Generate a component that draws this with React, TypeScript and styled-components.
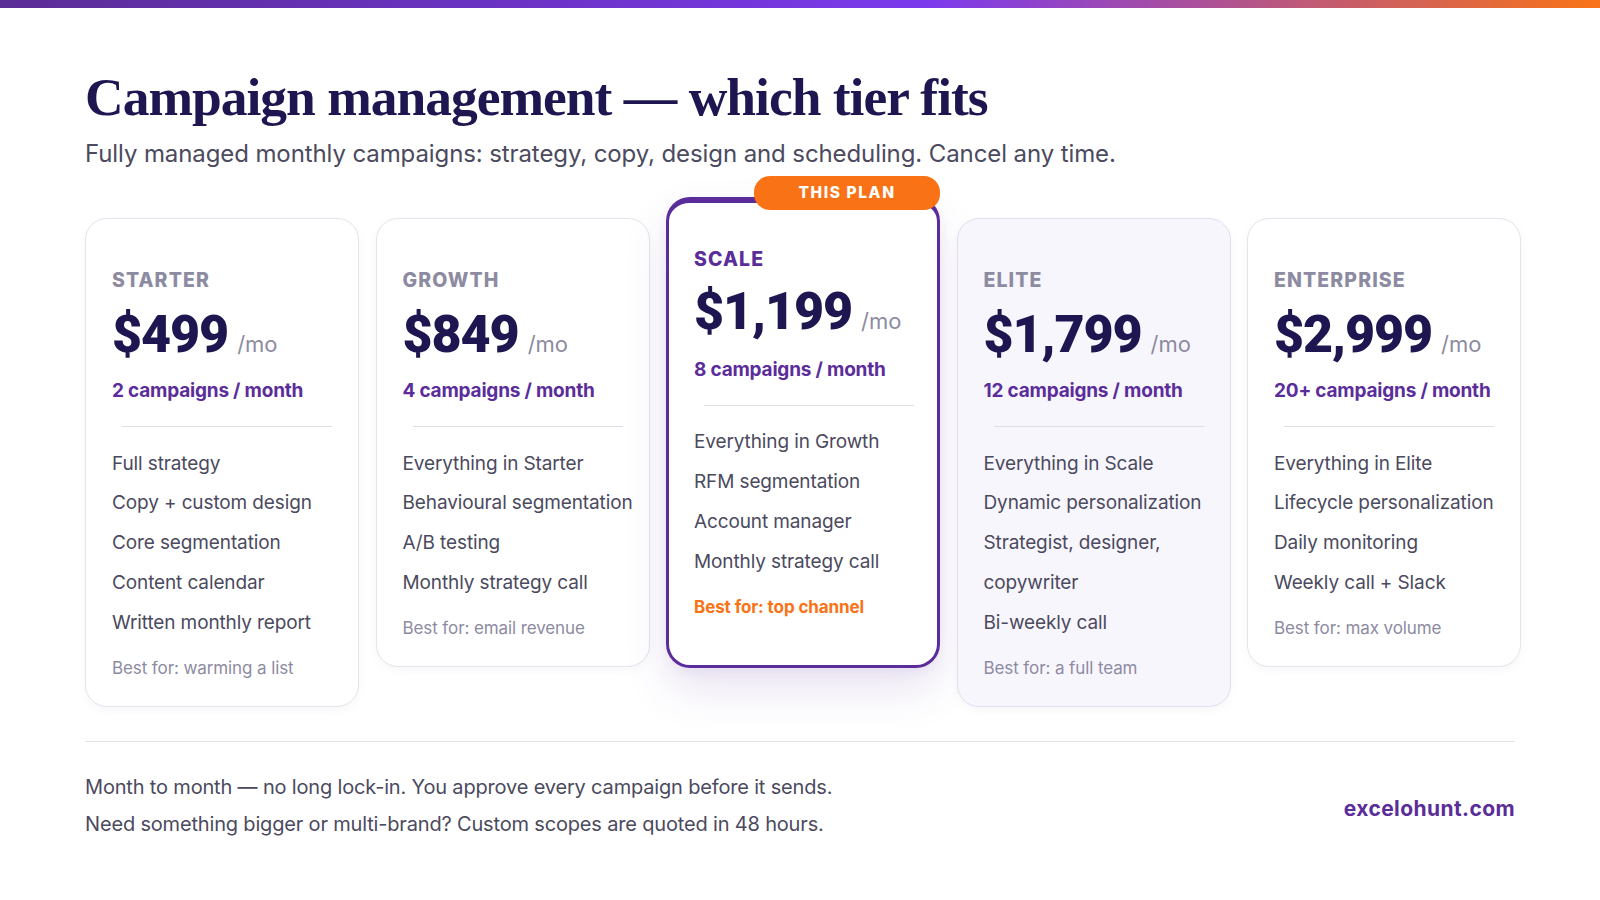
import React from "react";
import styled, { createGlobalStyle, css } from "styled-components";

const GlobalStyle = createGlobalStyle`
  * { box-sizing: border-box; }
  html, body { margin: 0; padding: 0; background: #ffffff; }
  body {
    font-family: Inter, "Noto Sans", "Liberation Sans", sans-serif;
    -webkit-font-smoothing: antialiased;
  }
`;

type Variant = "plain" | "featured" | "tinted";

interface Tier {
  name: string;
  price: string;
  count: string;
  features: string[];
  best: string;
  variant: Variant;
}

const tiers: Tier[] = [
  {
    name: "STARTER",
    price: "$499",
    count: "2 campaigns / month",
    features: [
      "Full strategy",
      "Copy + custom design",
      "Core segmentation",
      "Content calendar",
      "Written monthly report",
    ],
    best: "Best for: warming a list",
    variant: "plain",
  },
  {
    name: "GROWTH",
    price: "$849",
    count: "4 campaigns / month",
    features: [
      "Everything in Starter",
      "Behavioural segmentation",
      "A/B testing",
      "Monthly strategy call",
    ],
    best: "Best for: email revenue",
    variant: "plain",
  },
  {
    name: "SCALE",
    price: "$1,199",
    count: "8 campaigns / month",
    features: [
      "Everything in Growth",
      "RFM segmentation",
      "Account manager",
      "Monthly strategy call",
    ],
    best: "Best for: top channel",
    variant: "featured",
  },
  {
    name: "ELITE",
    price: "$1,799",
    count: "12 campaigns / month",
    features: [
      "Everything in Scale",
      "Dynamic personalization",
      "Strategist, designer, copywriter",
      "Bi-weekly call",
    ],
    best: "Best for: a full team",
    variant: "tinted",
  },
  {
    name: "ENTERPRISE",
    price: "$2,999",
    count: "20+ campaigns / month",
    features: [
      "Everything in Elite",
      "Lifecycle personalization",
      "Daily monitoring",
      "Weekly call + Slack",
    ],
    best: "Best for: max volume",
    variant: "plain",
  },
];

const Page = styled.div`
  width: 1600px;
  min-height: 900px;
  background: #ffffff;
`;

const TopBar = styled.div`
  height: 8px;
  background: linear-gradient(90deg, #5b2d96 0%, #6d33c9 35%, #7c3aed 58%, #b4548a 78%, #f97316 100%);
`;

const Content = styled.main`
  padding: 0 85px;
`;

const Title = styled.h1`
  margin: 59px 0 0;
  font-family: "Liberation Serif", "DejaVu Serif", serif;
  font-weight: 700;
  font-size: 53.5px;
  line-height: 60px;
  letter-spacing: -1px;
  color: #1d1650;
`;

const Subtitle = styled.p`
  margin: 12px 0 0;
  font-size: 24px;
  line-height: 30px;
  letter-spacing: -0.1px;
  color: #4b4a5e;
`;

const CardRow = styled.div`
  margin-top: 49px;
  display: grid;
  grid-template-columns: repeat(5, 274px);
  column-gap: 16.5px;
  align-items: start;
`;

const Card = styled.section<{ $variant: Variant }>`
  position: relative;
  display: flex;
  flex-direction: column;
  border-radius: 22px;
  border: 1px solid #e5e3ec;
  background: #ffffff;
  padding: 49px 6px 26px 26px;
  box-shadow: 0 3px 10px rgba(40, 30, 80, 0.04);

  ${(p) =>
    p.$variant === "tinted" &&
    css`
      background: #f8f6fd;
      border-color: #e2deee;
    `}

  ${(p) =>
    p.$variant === "featured" &&
    css`
      margin-top: -21.4px;
      border: 3px solid #5b2d9a;
      border-top-width: 6px;
      border-radius: 24px;
      padding: 44.5px 3px 46px 25px;
      box-shadow: 0 22px 44px rgba(91, 45, 154, 0.13), 0 4px 12px rgba(91, 45, 154, 0.06);
    `}
`;

const Badge = styled.div`
  position: absolute;
  top: -27px;
  right: -3px;
  width: 186px;
  height: 34px;
  border-radius: 16px;
  background: #f97316;
  color: #ffffff;
  font-weight: 800;
  font-size: 15.5px;
  letter-spacing: 1.6px;
  display: flex;
  align-items: center;
  justify-content: center;
`;

const TierName = styled.div<{ $featured: boolean }>`
  font-size: 19.5px;
  line-height: 24px;
  font-weight: 800;
  letter-spacing: 1.1px;
  color: ${(p) => (p.$featured ? "#5b2d9a" : "#8d8ba2")};
`;

const PriceRow = styled.div<{ $featured: boolean }>`
  margin-top: ${(p) => (p.$featured ? "14.5px" : "17px")};
  display: flex;
  align-items: baseline;
  gap: 9px;
`;

const Price = styled.span`
  font-family: Roboto, Inter, sans-serif;
  font-size: 52px;
  line-height: 52px;
  font-weight: 900;
  letter-spacing: -1.1px;
  color: #1d1650;
`;

const Per = styled.span`
  font-size: 22px;
  font-weight: 400;
  color: #8d8ba2;
`;

const Count = styled.div<{ $featured: boolean }>`
  margin-top: ${(p) => (p.$featured ? "20px" : "18px")};
  font-size: 19px;
  line-height: 24px;
  font-weight: 700;
  letter-spacing: -0.2px;
  color: #5b2d9a;
`;

const Divider = styled.hr`
  margin: 23px 20px 0 10px;
  border: none;
  height: 1px;
  background: #dfdde8;
`;

const FeatureList = styled.ul`
  margin: 16.5px 0 0;
  padding: 0;
  list-style: none;
`;

const Feature = styled.li`
  font-size: 19px;
  line-height: 39.8px;
  letter-spacing: -0.12px;
  color: #4b4a5e;
`;

const BestFor = styled.div<{ $featured: boolean }>`
  margin-top: 13.5px;
  font-size: 17px;
  line-height: 24px;
  letter-spacing: -0.1px;
  color: ${(p) => (p.$featured ? "#f97316" : "#8d8ba2")};
  font-weight: ${(p) => (p.$featured ? 700 : 400)};
`;

const FooterRule = styled.hr`
  margin: 34px 0 0;
  border: none;
  height: 1px;
  background: #e3e2e8;
`;

const Footer = styled.footer`
  margin-top: 27px;
  display: flex;
  align-items: center;
  justify-content: space-between;
`;

const Notes = styled.div`
  display: flex;
  flex-direction: column;
`;

const Note = styled.p`
  margin: 0;
  font-size: 20px;
  line-height: 37px;
  letter-spacing: -0.17px;
  color: #4b4a5e;
`;

const Brand = styled.div`
  font-size: 21px;
  font-weight: 700;
  letter-spacing: 0.4px;
  color: #5b2d9a;
  margin-top: 5px;
`;

function TierCard({ tier }: { tier: Tier }) {
  const featured = tier.variant === "featured";
  return (
    <Card $variant={tier.variant}>
      {featured && <Badge>THIS PLAN</Badge>}
      <TierName $featured={featured}>{tier.name}</TierName>
      <PriceRow $featured={featured}>
        <Price>{tier.price}</Price>
        <Per>/mo</Per>
      </PriceRow>
      <Count $featured={featured}>{tier.count}</Count>
      <Divider />
      <FeatureList>
        {tier.features.map((f) => (
          <Feature key={f}>{f}</Feature>
        ))}
      </FeatureList>
      <BestFor $featured={featured}>{tier.best}</BestFor>
    </Card>
  );
}

export default function App() {
  return (
    <Page>
      <GlobalStyle />
      <TopBar />
      <Content>
        <Title>Campaign management — which tier fits</Title>
        <Subtitle>
          Fully managed monthly campaigns: strategy, copy, design and scheduling. Cancel any time.
        </Subtitle>
        <CardRow>
          {tiers.map((t) => (
            <TierCard key={t.name} tier={t} />
          ))}
        </CardRow>
        <FooterRule />
        <Footer>
          <Notes>
            <Note>Month to month — no long lock-in. You approve every campaign before it sends.</Note>
            <Note>Need something bigger or multi-brand? Custom scopes are quoted in 48 hours.</Note>
          </Notes>
          <Brand>excelohunt.com</Brand>
        </Footer>
      </Content>
    </Page>
  );
}
